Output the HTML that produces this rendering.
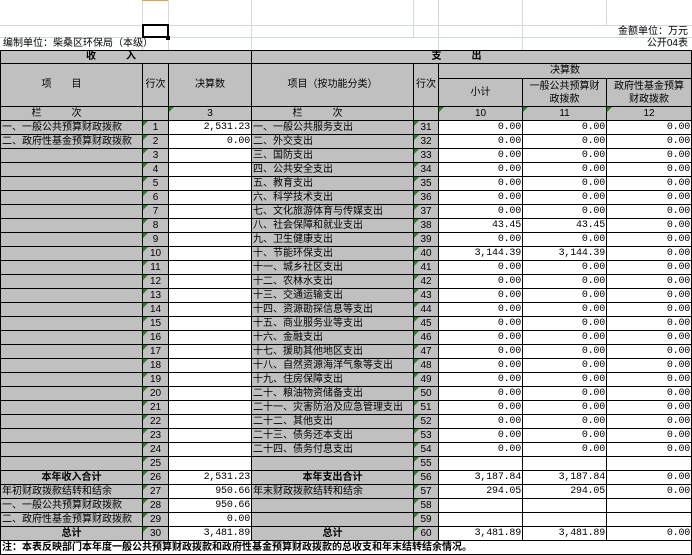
<!DOCTYPE html>
<html><head><meta charset="utf-8"><style>
*{margin:0;padding:0;box-sizing:border-box}
body{width:692px;height:554px;background:#fff;position:relative;overflow:hidden;font-family:"Liberation Sans","Noto Sans CJK SC",sans-serif;font-size:10px;color:#000}
.g{position:absolute;background:#d0d7e5}
.t{position:absolute;white-space:nowrap;font-size:10px;line-height:12px}
table{position:absolute;left:0;top:50px;width:691px;border-collapse:collapse;table-layout:fixed}
tr{height:14px}
td{border:1px solid #000;padding:0 1px;height:14px;line-height:12px;white-space:nowrap;overflow:hidden;background:#c0c0c0;font-size:10px;position:relative}
td.w{background:#fff}
td.c{text-align:center}
td.r{text-align:right;font-family:"Liberation Mono","Noto Sans CJK SC",monospace;font-size:10px;letter-spacing:-0.2px}
td.b{font-weight:bold;text-align:center}
td.tr::before{content:"";position:absolute;left:0;top:0;border-top:5px solid #1a8a1a;border-right:5px solid transparent}
</style></head><body>
<div class="g" style="left:142px;top:0;width:1px;height:50px"></div>
<div class="g" style="left:168px;top:0;width:1px;height:50px"></div>
<div class="g" style="left:251px;top:0;width:1px;height:50px"></div>
<div class="g" style="left:413px;top:0;width:1px;height:37px"></div>
<div class="g" style="left:438px;top:0;width:1px;height:50px"></div>
<div class="g" style="left:522px;top:0;width:1px;height:50px"></div>
<div class="g" style="left:606px;top:0;width:1px;height:25px"></div>
<div class="g" style="left:0;top:25px;width:692px;height:1px"></div>
<div class="g" style="left:0;top:37px;width:692px;height:1px"></div>
<div style="position:absolute;left:142px;top:0;width:26px;height:1px;background:#f0a030"></div>
<div style="position:absolute;left:142px;top:24px;width:27px;height:14px;border:2px solid #000"></div>
<div style="position:absolute;left:166px;top:36px;width:4px;height:4px;background:#000"></div>
<div class="t" style="left:3px;top:38px">编制单位：柴桑区环保局（本级）</div>
<div class="t" style="right:4px;top:26px">金额单位：万元</div>
<div class="t" style="right:4px;top:38px">公开04表</div>
<table>
<colgroup><col style="width:142px"><col style="width:26px"><col style="width:83px"><col style="width:162px"><col style="width:25px"><col style="width:84px"><col style="width:84px"><col style="width:85px"></colgroup>
<tr style="height:13px"><td colspan="3" class="b" style="height:13px;letter-spacing:30px">收入</td><td colspan="5" class="b" style="height:13px;letter-spacing:30px">支出</td></tr>
<tr style="height:15px"><td rowspan="2" class="c" style="letter-spacing:20px">项目</td><td rowspan="2" class="c" style="padding:0">行次</td><td rowspan="2" class="c">决算数</td><td rowspan="2" class="c">项目（按功能分类）</td><td rowspan="2" class="c" style="padding:0">行次</td><td colspan="3" class="b" style="font-weight:normal;height:15px">决算数</td></tr>
<tr style="height:28px"><td class="c" style="height:28px">小计</td><td class="c" style="white-space:normal;line-height:13px;padding:0 4px">一般公共预算财政拨款</td><td class="c" style="white-space:normal;line-height:13px;padding:0 4px">政府性基金预算财政拨款</td></tr>
<tr><td class="c" style="letter-spacing:30px">栏次</td><td></td><td class="c tr">3</td><td class="c" style="letter-spacing:30px">栏次</td><td></td><td class="c tr">10</td><td class="c tr">11</td><td class="c tr">12</td></tr>
<tr><td>一、一般公共预算财政拨款</td><td class="c tr">1</td><td class="w r">2,531.23</td><td>一、一般公共服务支出</td><td class="c tr">31</td><td class="w r">0.00</td><td class="w r">0.00</td><td class="w r">0.00</td></tr>
<tr><td>二、政府性基金预算财政拨款</td><td class="c tr">2</td><td class="w r">0.00</td><td>二、外交支出</td><td class="c tr">32</td><td class="w r">0.00</td><td class="w r">0.00</td><td class="w r">0.00</td></tr>
<tr><td></td><td class="c tr">3</td><td class="w"></td><td>三、国防支出</td><td class="c tr">33</td><td class="w r">0.00</td><td class="w r">0.00</td><td class="w r">0.00</td></tr>
<tr><td></td><td class="c tr">4</td><td class="w"></td><td>四、公共安全支出</td><td class="c tr">34</td><td class="w r">0.00</td><td class="w r">0.00</td><td class="w r">0.00</td></tr>
<tr><td></td><td class="c tr">5</td><td class="w"></td><td>五、教育支出</td><td class="c tr">35</td><td class="w r">0.00</td><td class="w r">0.00</td><td class="w r">0.00</td></tr>
<tr><td></td><td class="c tr">6</td><td class="w"></td><td>六、科学技术支出</td><td class="c tr">36</td><td class="w r">0.00</td><td class="w r">0.00</td><td class="w r">0.00</td></tr>
<tr><td></td><td class="c tr">7</td><td class="w"></td><td>七、文化旅游体育与传媒支出</td><td class="c tr">37</td><td class="w r">0.00</td><td class="w r">0.00</td><td class="w r">0.00</td></tr>
<tr><td></td><td class="c tr">8</td><td class="w"></td><td>八、社会保障和就业支出</td><td class="c tr">38</td><td class="w r">43.45</td><td class="w r">43.45</td><td class="w r">0.00</td></tr>
<tr><td></td><td class="c tr">9</td><td class="w"></td><td>九、卫生健康支出</td><td class="c tr">39</td><td class="w r">0.00</td><td class="w r">0.00</td><td class="w r">0.00</td></tr>
<tr><td></td><td class="c tr">10</td><td class="w"></td><td>十、节能环保支出</td><td class="c tr">40</td><td class="w r">3,144.39</td><td class="w r">3,144.39</td><td class="w r">0.00</td></tr>
<tr><td></td><td class="c tr">11</td><td class="w"></td><td>十一、城乡社区支出</td><td class="c tr">41</td><td class="w r">0.00</td><td class="w r">0.00</td><td class="w r">0.00</td></tr>
<tr><td></td><td class="c tr">12</td><td class="w"></td><td>十二、农林水支出</td><td class="c tr">42</td><td class="w r">0.00</td><td class="w r">0.00</td><td class="w r">0.00</td></tr>
<tr><td></td><td class="c tr">13</td><td class="w"></td><td>十三、交通运输支出</td><td class="c tr">43</td><td class="w r">0.00</td><td class="w r">0.00</td><td class="w r">0.00</td></tr>
<tr><td></td><td class="c tr">14</td><td class="w"></td><td>十四、资源勘探信息等支出</td><td class="c tr">44</td><td class="w r">0.00</td><td class="w r">0.00</td><td class="w r">0.00</td></tr>
<tr><td></td><td class="c tr">15</td><td class="w"></td><td>十五、商业服务业等支出</td><td class="c tr">45</td><td class="w r">0.00</td><td class="w r">0.00</td><td class="w r">0.00</td></tr>
<tr><td></td><td class="c tr">16</td><td class="w"></td><td>十六、金融支出</td><td class="c tr">46</td><td class="w r">0.00</td><td class="w r">0.00</td><td class="w r">0.00</td></tr>
<tr><td></td><td class="c tr">17</td><td class="w"></td><td>十七、援助其他地区支出</td><td class="c tr">47</td><td class="w r">0.00</td><td class="w r">0.00</td><td class="w r">0.00</td></tr>
<tr><td></td><td class="c tr">18</td><td class="w"></td><td>十八、自然资源海洋气象等支出</td><td class="c tr">48</td><td class="w r">0.00</td><td class="w r">0.00</td><td class="w r">0.00</td></tr>
<tr><td></td><td class="c tr">19</td><td class="w"></td><td>十九、住房保障支出</td><td class="c tr">49</td><td class="w r">0.00</td><td class="w r">0.00</td><td class="w r">0.00</td></tr>
<tr><td></td><td class="c tr">20</td><td class="w"></td><td>二十、粮油物资储备支出</td><td class="c tr">50</td><td class="w r">0.00</td><td class="w r">0.00</td><td class="w r">0.00</td></tr>
<tr><td></td><td class="c tr">21</td><td class="w"></td><td>二十一、灾害防治及应急管理支出</td><td class="c tr">51</td><td class="w r">0.00</td><td class="w r">0.00</td><td class="w r">0.00</td></tr>
<tr><td></td><td class="c tr">22</td><td class="w"></td><td>二十二、其他支出</td><td class="c tr">52</td><td class="w r">0.00</td><td class="w r">0.00</td><td class="w r">0.00</td></tr>
<tr><td></td><td class="c tr">23</td><td class="w"></td><td>二十三、债务还本支出</td><td class="c tr">53</td><td class="w r">0.00</td><td class="w r">0.00</td><td class="w r">0.00</td></tr>
<tr><td></td><td class="c tr">24</td><td class="w"></td><td>二十四、债务付息支出</td><td class="c tr">54</td><td class="w r">0.00</td><td class="w r">0.00</td><td class="w r">0.00</td></tr>
<tr><td></td><td class="c tr">25</td><td class="w"></td><td></td><td class="c tr">55</td><td class="w"></td><td class="w"></td><td class="w"></td></tr>
<tr><td class="b">本年收入合计</td><td class="c tr">26</td><td class="w r">2,531.23</td><td class="b">本年支出合计</td><td class="c tr">56</td><td class="w r">3,187.84</td><td class="w r">3,187.84</td><td class="w r">0.00</td></tr>
<tr><td>年初财政拨款结转和结余</td><td class="c tr">27</td><td class="w r">950.66</td><td>年末财政拨款结转和结余</td><td class="c tr">57</td><td class="w r">294.05</td><td class="w r">294.05</td><td class="w r">0.00</td></tr>
<tr><td>一、一般公共预算财政拨款</td><td class="c tr">28</td><td class="w r">950.66</td><td></td><td class="c tr">58</td><td class="w"></td><td class="w"></td><td class="w"></td></tr>
<tr><td>二、政府性基金预算财政拨款</td><td class="c tr">29</td><td class="w r">0.00</td><td></td><td class="c tr">59</td><td class="w"></td><td class="w"></td><td class="w"></td></tr>
<tr><td class="b">总计</td><td class="c tr">30</td><td class="w r">3,481.89</td><td class="b">总计</td><td class="c tr">60</td><td class="w r">3,481.89</td><td class="w r">3,481.89</td><td class="w r">0.00</td></tr>
<tr><td colspan="8" class="w" style="font-weight:bold;font-size:10px">注：本表反映部门本年度一般公共预算财政拨款和政府性基金预算财政拨款的总收支和年末结转结余情况。</td></tr>
</table>
</body></html>
